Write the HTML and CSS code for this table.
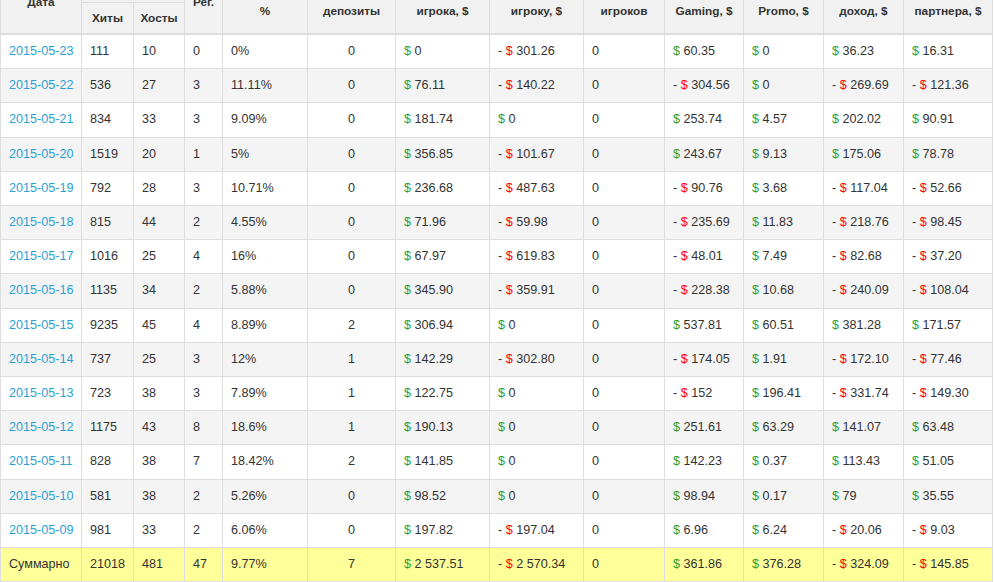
FILE: index.html
```html
<!DOCTYPE html>
<html lang="ru">
<head>
<meta charset="utf-8">
<title>Статистика</title>
<link rel="stylesheet" href="styles.css">
</head>
<body>
<div class="page">
<table class="stats">
<colgroup>
<col class="c-date"><col class="c-hits"><col class="c-hosts"><col class="c-reg"><col class="c-pct"><col class="c-dep"><col class="c-bet"><col class="c-win"><col class="c-pl"><col class="c-gam"><col class="c-pro"><col class="c-inc"><col class="c-par">
</colgroup>
<thead>
<tr class="hrow1">
<th rowspan="2">Дата</th>
<th colspan="2" class="group"></th>
<th rowspan="2">Рег.</th>
<th rowspan="2" class="shift">%</th>
<th rowspan="2" class="shift">депозиты</th>
<th rowspan="2" class="shift">игрока, $</th>
<th rowspan="2" class="shift">игроку, $</th>
<th rowspan="2" class="shift">игроков</th>
<th rowspan="2" class="shift">Gaming, $</th>
<th rowspan="2" class="shift">Promo, $</th>
<th rowspan="2" class="shift">доход, $</th>
<th rowspan="2" class="shift">партнера, $</th>
</tr>
<tr class="hrow2">
<th>Хиты</th>
<th>Хосты</th>
</tr>
</thead>
<tbody>
<tr><td><a href="#">2015-05-23</a></td><td>111</td><td>10</td><td>0</td><td>0%</td><td class="ctr">0</td><td><span class="pos">$</span> 0</td><td>- <span class="neg">$</span> 301.26</td><td>0</td><td><span class="pos">$</span> 60.35</td><td><span class="pos">$</span> 0</td><td><span class="pos">$</span> 36.23</td><td><span class="pos">$</span> 16.31</td></tr>
<tr><td><a href="#">2015-05-22</a></td><td>536</td><td>27</td><td>3</td><td>11.11%</td><td class="ctr">0</td><td><span class="pos">$</span> 76.11</td><td>- <span class="neg">$</span> 140.22</td><td>0</td><td>- <span class="neg">$</span> 304.56</td><td><span class="pos">$</span> 0</td><td>- <span class="neg">$</span> 269.69</td><td>- <span class="neg">$</span> 121.36</td></tr>
<tr><td><a href="#">2015-05-21</a></td><td>834</td><td>33</td><td>3</td><td>9.09%</td><td class="ctr">0</td><td><span class="pos">$</span> 181.74</td><td><span class="pos">$</span> 0</td><td>0</td><td><span class="pos">$</span> 253.74</td><td><span class="pos">$</span> 4.57</td><td><span class="pos">$</span> 202.02</td><td><span class="pos">$</span> 90.91</td></tr>
<tr><td><a href="#">2015-05-20</a></td><td>1519</td><td>20</td><td>1</td><td>5%</td><td class="ctr">0</td><td><span class="pos">$</span> 356.85</td><td>- <span class="neg">$</span> 101.67</td><td>0</td><td><span class="pos">$</span> 243.67</td><td><span class="pos">$</span> 9.13</td><td><span class="pos">$</span> 175.06</td><td><span class="pos">$</span> 78.78</td></tr>
<tr><td><a href="#">2015-05-19</a></td><td>792</td><td>28</td><td>3</td><td>10.71%</td><td class="ctr">0</td><td><span class="pos">$</span> 236.68</td><td>- <span class="neg">$</span> 487.63</td><td>0</td><td>- <span class="neg">$</span> 90.76</td><td><span class="pos">$</span> 3.68</td><td>- <span class="neg">$</span> 117.04</td><td>- <span class="neg">$</span> 52.66</td></tr>
<tr><td><a href="#">2015-05-18</a></td><td>815</td><td>44</td><td>2</td><td>4.55%</td><td class="ctr">0</td><td><span class="pos">$</span> 71.96</td><td>- <span class="neg">$</span> 59.98</td><td>0</td><td>- <span class="neg">$</span> 235.69</td><td><span class="pos">$</span> 11.83</td><td>- <span class="neg">$</span> 218.76</td><td>- <span class="neg">$</span> 98.45</td></tr>
<tr><td><a href="#">2015-05-17</a></td><td>1016</td><td>25</td><td>4</td><td>16%</td><td class="ctr">0</td><td><span class="pos">$</span> 67.97</td><td>- <span class="neg">$</span> 619.83</td><td>0</td><td>- <span class="neg">$</span> 48.01</td><td><span class="pos">$</span> 7.49</td><td>- <span class="neg">$</span> 82.68</td><td>- <span class="neg">$</span> 37.20</td></tr>
<tr><td><a href="#">2015-05-16</a></td><td>1135</td><td>34</td><td>2</td><td>5.88%</td><td class="ctr">0</td><td><span class="pos">$</span> 345.90</td><td>- <span class="neg">$</span> 359.91</td><td>0</td><td>- <span class="neg">$</span> 228.38</td><td><span class="pos">$</span> 10.68</td><td>- <span class="neg">$</span> 240.09</td><td>- <span class="neg">$</span> 108.04</td></tr>
<tr><td><a href="#">2015-05-15</a></td><td>9235</td><td>45</td><td>4</td><td>8.89%</td><td class="ctr">2</td><td><span class="pos">$</span> 306.94</td><td><span class="pos">$</span> 0</td><td>0</td><td><span class="pos">$</span> 537.81</td><td><span class="pos">$</span> 60.51</td><td><span class="pos">$</span> 381.28</td><td><span class="pos">$</span> 171.57</td></tr>
<tr><td><a href="#">2015-05-14</a></td><td>737</td><td>25</td><td>3</td><td>12%</td><td class="ctr">1</td><td><span class="pos">$</span> 142.29</td><td>- <span class="neg">$</span> 302.80</td><td>0</td><td>- <span class="neg">$</span> 174.05</td><td><span class="pos">$</span> 1.91</td><td>- <span class="neg">$</span> 172.10</td><td>- <span class="neg">$</span> 77.46</td></tr>
<tr><td><a href="#">2015-05-13</a></td><td>723</td><td>38</td><td>3</td><td>7.89%</td><td class="ctr">1</td><td><span class="pos">$</span> 122.75</td><td><span class="pos">$</span> 0</td><td>0</td><td>- <span class="neg">$</span> 152</td><td><span class="pos">$</span> 196.41</td><td>- <span class="neg">$</span> 331.74</td><td>- <span class="neg">$</span> 149.30</td></tr>
<tr><td><a href="#">2015-05-12</a></td><td>1175</td><td>43</td><td>8</td><td>18.6%</td><td class="ctr">1</td><td><span class="pos">$</span> 190.13</td><td><span class="pos">$</span> 0</td><td>0</td><td><span class="pos">$</span> 251.61</td><td><span class="pos">$</span> 63.29</td><td><span class="pos">$</span> 141.07</td><td><span class="pos">$</span> 63.48</td></tr>
<tr><td><a href="#">2015-05-11</a></td><td>828</td><td>38</td><td>7</td><td>18.42%</td><td class="ctr">2</td><td><span class="pos">$</span> 141.85</td><td><span class="pos">$</span> 0</td><td>0</td><td><span class="pos">$</span> 142.23</td><td><span class="pos">$</span> 0.37</td><td><span class="pos">$</span> 113.43</td><td><span class="pos">$</span> 51.05</td></tr>
<tr><td><a href="#">2015-05-10</a></td><td>581</td><td>38</td><td>2</td><td>5.26%</td><td class="ctr">0</td><td><span class="pos">$</span> 98.52</td><td><span class="pos">$</span> 0</td><td>0</td><td><span class="pos">$</span> 98.94</td><td><span class="pos">$</span> 0.17</td><td><span class="pos">$</span> 79</td><td><span class="pos">$</span> 35.55</td></tr>
<tr><td><a href="#">2015-05-09</a></td><td>981</td><td>33</td><td>2</td><td>6.06%</td><td class="ctr">0</td><td><span class="pos">$</span> 197.82</td><td>- <span class="neg">$</span> 197.04</td><td>0</td><td><span class="pos">$</span> 6.96</td><td><span class="pos">$</span> 6.24</td><td>- <span class="neg">$</span> 20.06</td><td>- <span class="neg">$</span> 9.03</td></tr>
<tr class="total"><td>Суммарно</td><td>21018</td><td>481</td><td>47</td><td>9.77%</td><td class="ctr">7</td><td><span class="pos">$</span> 2 537.51</td><td>- <span class="neg">$</span> 2 570.34</td><td>0</td><td><span class="pos">$</span> 361.86</td><td><span class="pos">$</span> 376.28</td><td>- <span class="neg">$</span> 324.09</td><td>- <span class="neg">$</span> 145.85</td></tr>
</tbody>
</table>
</div>
</body>
</html>
```

FILE: styles.css
```css
html, body {
  margin: 0;
  padding: 0;
  background: #ffffff;
}
body {
  font-family: "Liberation Sans", Arial, sans-serif;
  font-size: 12.6px;
  color: #333333;
  overflow: hidden;
}
.page {
  width: 994px;
  height: 582px;
  overflow: hidden;
}
.stats {
  margin-top: -31px;
  border-collapse: collapse;
  table-layout: fixed;
  width: 993px;
  border: 1px solid #dddddd;
}
.c-date { width: 81px; }
.c-hits { width: 52px; }
.c-hosts { width: 51px; }
.c-reg { width: 38px; }
.c-pct { width: 85px; }
.c-dep { width: 88px; }
.c-bet { width: 94px; }
.c-win { width: 94px; }
.c-pl { width: 81px; }
.c-gam { width: 79px; }
.c-pro { width: 80px; }
.c-inc { width: 80px; }
.c-par { width: 89px; }

.stats th {
  background: #f1f1f1;
  border: 1px solid #dddddd;
  font-weight: bold;
  font-size: 11.8px;
  text-align: center;
  vertical-align: middle;
  padding: 6px 4px;
  line-height: 18px;
  white-space: nowrap;
}
.stats thead tr:last-child th,
.stats thead th[rowspan] {
  border-bottom: 2px solid #dddddd;
}
.hrow1 { height: 33px; }
.hrow2 th { height: 18px; }
.stats th.shift {
  padding-top: 24px;
}
.stats td {
  border: 1px solid #dddddd;
  padding: 8px 8px;
  line-height: 17.2px;
  white-space: nowrap;
  vertical-align: middle;
  text-align: left;
}
.stats tbody tr:nth-child(even) td {
  background: #f4f4f4;
}
.stats td.ctr { text-align: center; }
.stats a {
  color: #2a9fd6;
  text-decoration: none;
}
.pos { color: #2f9e2f; }
.neg { color: #ff0000; }
.stats tbody tr.total td {
  background: #ffff99;
  line-height: 17px;
}
```
